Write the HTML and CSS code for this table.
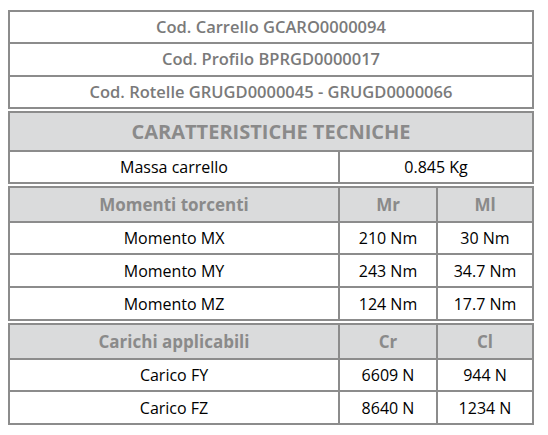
FILE: index.html
```html
<!DOCTYPE html>
<html lang="it">
<head>
<meta charset="utf-8">
<title>Caratteristiche tecniche</title>
<link rel="stylesheet" href="styles.css">
</head>
<body>
<div class="sheet">
  <div class="block">
    <div class="row r1"><div class="cell code full">Cod. Carrello GCARO0000094</div></div>
    <div class="row r2"><div class="cell code full">Cod. Profilo BPRGD0000017</div></div>
    <div class="row r1"><div class="cell code full">Cod. Rotelle GRUGD0000045 - GRUGD0000066</div></div>
  </div>

  <div class="block">
    <div class="row rtitle"><div class="cell head title full">CARATTERISTICHE TECNICHE</div></div>
    <div class="row r1">
      <div class="cell c1">Massa carrello</div>
      <div class="cell cwide">0.845 Kg</div>
    </div>
  </div>

  <div class="block">
    <div class="row rhead">
      <div class="cell head sub c1">Momenti torcenti</div>
      <div class="cell head sub c2">Mr</div>
      <div class="cell head sub c3">Ml</div>
    </div>
    <div class="row r1">
      <div class="cell c1">Momento MX</div>
      <div class="cell c2">210 Nm</div>
      <div class="cell c3">30 Nm</div>
    </div>
    <div class="row r2">
      <div class="cell c1">Momento MY</div>
      <div class="cell c2">243 Nm</div>
      <div class="cell c3">34.7 Nm</div>
    </div>
    <div class="row r2">
      <div class="cell c1">Momento MZ</div>
      <div class="cell c2">124 Nm</div>
      <div class="cell c3">17.7 Nm</div>
    </div>
  </div>

  <div class="block">
    <div class="row rhead">
      <div class="cell head sub c1">Carichi applicabili</div>
      <div class="cell head sub c2">Cr</div>
      <div class="cell head sub c3">Cl</div>
    </div>
    <div class="row r1">
      <div class="cell c1">Carico FY</div>
      <div class="cell c2">6609 N</div>
      <div class="cell c3">944 N</div>
    </div>
    <div class="row r2">
      <div class="cell c1">Carico FZ</div>
      <div class="cell c2">8640 N</div>
      <div class="cell c3">1234 N</div>
    </div>
  </div>
</div>
</body>
</html>
```

FILE: styles.css
```css
html, body {
  margin: 0;
  padding: 0;
  background: #ffffff;
}

body {
  font-family: "Open Sans", "Noto Sans", sans-serif;
  font-size: 16px;
  color: #000;
}

.sheet {
  padding: 10px 0 0 8px;
  width: 526px;
}

.block {
  border: 1px solid #8c8c8c;
  margin-bottom: 2px;
}

.row {
  display: flex;
}

.r1 { height: 32px; }
.r2 { height: 33px; }
.rtitle { height: 39px; }
.rhead { height: 35px; }

.cell {
  box-sizing: border-box;
  border: 1px solid #8c8c8c;
  display: flex;
  align-items: center;
  justify-content: center;
  white-space: nowrap;
  line-height: 1;
}

.full { width: 524px; }
.c1 { width: 330px; }
.c2 { width: 98px; }
.c3 { width: 96px; }
.cwide { width: 194px; }

.code {
  color: #7a7a7a;
  font-weight: 600;
  font-size: 16.5px;
}

.head {
  background: #dadbdc;
  color: #8a8a8a;
  font-weight: 700;
}

.title {
  font-size: 20px;
}

.sub {
  font-size: 17px;
}
```
